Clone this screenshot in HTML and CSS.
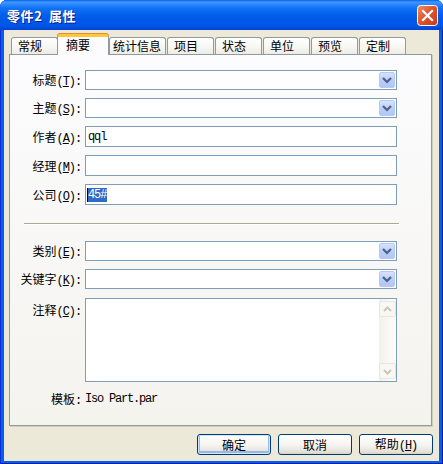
FILE: index.html
```html
<!DOCTYPE html>
<html lang="zh-CN">
<head>
  <meta charset="UTF-8" />
  <title>零件2 属性</title>
  <link rel="stylesheet" href="styles.css">
</head>
<body>
  <div class="window">
    <div class="titlebar">
      <span class="title">零件2&nbsp;属性</span>
      <span class="close">
        <svg width="21" height="21" viewBox="0 0 21 21">
          <defs>
            <linearGradient id="cg" x1="0" y1="0" x2="1" y2="1">
              <stop offset="0" stop-color="#F0906E"/>
              <stop offset="0.45" stop-color="#E2552E"/>
              <stop offset="1" stop-color="#C23A1C"/>
            </linearGradient>
          </defs>
          <rect x="0.5" y="0.5" width="20" height="20" rx="3" fill="url(#cg)" stroke="#FFFFFF"/>
          <path d="M6 6 L15 15 M15 6 L6 15" stroke="#FFFFFF" stroke-width="2.2" stroke-linecap="square"/>
        </svg>
      </span>
    </div>

    <div class="client">
      <!-- tab strip -->
      <div class="tabs">
        <div class="tab">常规</div>
        <div class="tab active">摘要</div>
        <div class="tab tab-wide">统计信息</div>
        <div class="tab">项目</div>
        <div class="tab">状态</div>
        <div class="tab">单位</div>
        <div class="tab">预览</div>
        <div class="tab">定制</div>
      </div>

      <div class="panel">
        <div class="row">
          <span class="lbl">标题<span class="m">(<u>T</u>):</span></span>
          <div class="field combo"><span class="val"></span><span class="drop"><svg width="14" height="14" viewBox="0 0 14 14"><polyline points="3,5 7,9 11,5" fill="none" stroke="#4D6185" stroke-width="2.2"/></svg></span></div>
        </div>
        <div class="row">
          <span class="lbl">主题<span class="m">(<u>S</u>):</span></span>
          <div class="field combo"><span class="val"></span><span class="drop"><svg width="14" height="14" viewBox="0 0 14 14"><polyline points="3,5 7,9 11,5" fill="none" stroke="#4D6185" stroke-width="2.2"/></svg></span></div>
        </div>
        <div class="row">
          <span class="lbl">作者<span class="m">(<u>A</u>):</span></span>
          <div class="field text"><span class="val m">qql</span></div>
        </div>
        <div class="row">
          <span class="lbl">经理<span class="m">(<u>M</u>):</span></span>
          <div class="field text"><span class="val"></span></div>
        </div>
        <div class="row">
          <span class="lbl">公司<span class="m">(<u>O</u>):</span></span>
          <div class="field text"><span class="val m"><span class="sel">45#</span></span></div>
        </div>

        <div class="sep"></div>

        <div class="row">
          <span class="lbl">类别<span class="m">(<u>E</u>):</span></span>
          <div class="field combo"><span class="val"></span><span class="drop"><svg width="14" height="14" viewBox="0 0 14 14"><polyline points="3,5 7,9 11,5" fill="none" stroke="#4D6185" stroke-width="2.2"/></svg></span></div>
        </div>
        <div class="row">
          <span class="lbl">关键字<span class="m">(<u>K</u>):</span></span>
          <div class="field combo"><span class="val"></span><span class="drop"><svg width="14" height="14" viewBox="0 0 14 14"><polyline points="3,5 7,9 11,5" fill="none" stroke="#4D6185" stroke-width="2.2"/></svg></span></div>
        </div>
        <div class="row row-top">
          <span class="lbl">注释<span class="m">(<u>C</u>):</span></span>
          <div class="field memo">
            <span class="val"></span>
            <div class="vscroll">
              <span class="sbtn"><svg width="15" height="15" viewBox="0 0 15 15"><polyline points="4,9 7.5,5.5 11,9" fill="none" stroke="#C9C7BA" stroke-width="2"/></svg></span>
              <span class="track"></span>
              <span class="sbtn"><svg width="15" height="15" viewBox="0 0 15 15"><polyline points="4,6 7.5,9.5 11,6" fill="none" stroke="#C9C7BA" stroke-width="2"/></svg></span>
            </div>
          </div>
        </div>
        <div class="row template">
          <span class="lbl">模板<span class="m">:</span></span>
          <span class="m">Iso Part.par</span>
        </div>
      </div>

      <div class="buttons">
        <button class="btn default">确定</button>
        <button class="btn">取消</button>
        <button class="btn">帮助<span class="m">(<u>H</u>)</span></button>
      </div>
    </div>
  </div>
</body>
</html>
```

FILE: styles.css
```css
body {
  margin: 0;
  background: #ffffff;
  font-family: "Noto Sans CJK SC", sans-serif;
  font-size: 12px;
  color: #000000;
}

.window {
  width: 443px;
  height: 464px;
  display: flex;
  flex-direction: column;
  background: #0A5DEA;
  box-shadow: inset 1px 0 0 #0831D9, inset -1px 0 0 #001EA0, inset 0 -1px 0 #001EA0;
  border-radius: 7px 7px 0 0;
  overflow: hidden;
}

.titlebar {
  height: 30px;
  flex: none;
  display: flex;
  align-items: center;
  padding: 0 5px 0 7px;
  background: linear-gradient(to bottom,
    #0A5FE8 0, #3E97FF 2px, #2F8BFD 4px, #1172F6 8px,
    #0461EC 14px, #0058E6 20px, #0157EA 25px, #004CDD 28px, #0043CF 30px);
}

.title {
  color: #ffffff;
  font-weight: bold;
  font-size: 13px;
  letter-spacing: 0.6px;
  word-spacing: 3px;
  text-shadow: 1px 1px 0 #0A1C8A;
}

.close {
  margin-left: auto;
  width: 21px;
  height: 21px;
  display: flex;
}

.client {
  flex: 1;
  margin: 0 4px 3px 4px;
  background: #ECE9D8;
  padding: 4px 7px 0 5px;
}

/* tab strip */
.tabs {
  height: 20px;
  display: flex;
  align-items: flex-end;
  gap: 1px;
  padding-left: 2px;
}

.tab {
  width: 47px;
  height: 17px;
  box-sizing: border-box;
  border: 1px solid #919B9C;
  border-bottom: none;
  border-radius: 3px 3px 0 0;
  background: linear-gradient(to bottom, #FFFFFF, #F6F6F3 60%, #ECEBE6);
  padding-left: 6px;
  line-height: 15px;
}

.tab-wide {
  width: 57px;
  padding-left: 3px;
}

.tab.active {
  position: relative;
  z-index: 2;
  width: 52px;
  height: 21px;
  margin: 0 -1px -1px -2px;
  padding-left: 8px;
  border-top: 3px solid #FFC83C;
  box-shadow: 0 -1px 0 #E68B2C;
  background: #FCFCFE;
  line-height: 16px;
}

.panel {
  height: 372px;
  box-sizing: border-box;
  border: 1px solid #919B9C;
  background: linear-gradient(to bottom, #FCFCFE, #F4F3EE);
  box-shadow: 1px 1px 0 #D0CDBF;
  padding: 15px 0 0 10px;
}

.row {
  display: flex;
  align-items: center;
  margin-bottom: 8px;
}

.row-top {
  align-items: flex-start;
  margin-top: 9px;
}

.row-top .lbl {
  padding-top: 3px;
}

.lbl {
  width: 61px;
  margin-right: 4px;
  text-align: right;
  white-space: nowrap;
}

.m {
  font-family: "Liberation Mono", "Noto Sans CJK SC", monospace;
  letter-spacing: -1.1px;
}

.field {
  width: 312px;
  height: 20px;
  box-sizing: border-box;
  border: 1px solid #7F9DB9;
  background: #ffffff;
  display: flex;
  align-items: center;
}

.field .val {
  flex: 1;
  padding-left: 2px;
  line-height: 14px;
}

.text {
  height: 21px;
}

.sel {
  background: #316AC5;
  color: #ffffff;
  padding-right: 1px;
  box-shadow: -1px 0 0 #000;
}

.combo {
  padding: 1px;
}

.drop {
  width: 16px;
  height: 16px;
  box-sizing: border-box;
  border: 1px solid #B7C9F3;
  border-radius: 2px;
  background: linear-gradient(to bottom, #D7E3FD, #BBCFF9 50%, #B0C6F7);
  display: flex;
  align-items: center;
  justify-content: center;
}

.memo {
  height: 84px;
  align-items: stretch;
}

.vscroll {
  width: 17px;
  display: flex;
  flex-direction: column;
  padding: 2px 0 2px 0;
  background: linear-gradient(to right, #F3F1EC, #FEFEFB);
}

.sbtn {
  height: 16px;
  box-sizing: border-box;
  border: 1px solid #E8E6DC;
  border-radius: 2px;
  background: #F8F7F2;
  display: flex;
  align-items: center;
  justify-content: center;
}

.track {
  flex: 1;
}

.sep {
  width: 375px;
  height: 1px;
  margin: 18px 0 16px 4px;
  background: #ACA899;
  border-bottom: 1px solid #FFFFFF;
}

.template .m {
  letter-spacing: -1.2px;
}

/* bottom buttons */
.buttons {
  display: flex;
  justify-content: flex-end;
  gap: 7px;
  margin: 8px -1px 0 0;
}

.btn {
  width: 74px;
  height: 21px;
  padding: 0;
  border: 1px solid #003C74;
  border-radius: 3px;
  background: linear-gradient(to bottom, #FFFFFF, #F5F4F0 55%, #E3E0D6 90%, #D6D0C5);
  font-family: "Noto Sans CJK SC", sans-serif;
  font-size: 12px;
  color: #000000;
  line-height: 17px;
}

.btn.default {
  box-shadow: inset 0 0 0 1px #CEE7FF, inset 0 -1px 0 2px #98B8EA;
}
```
